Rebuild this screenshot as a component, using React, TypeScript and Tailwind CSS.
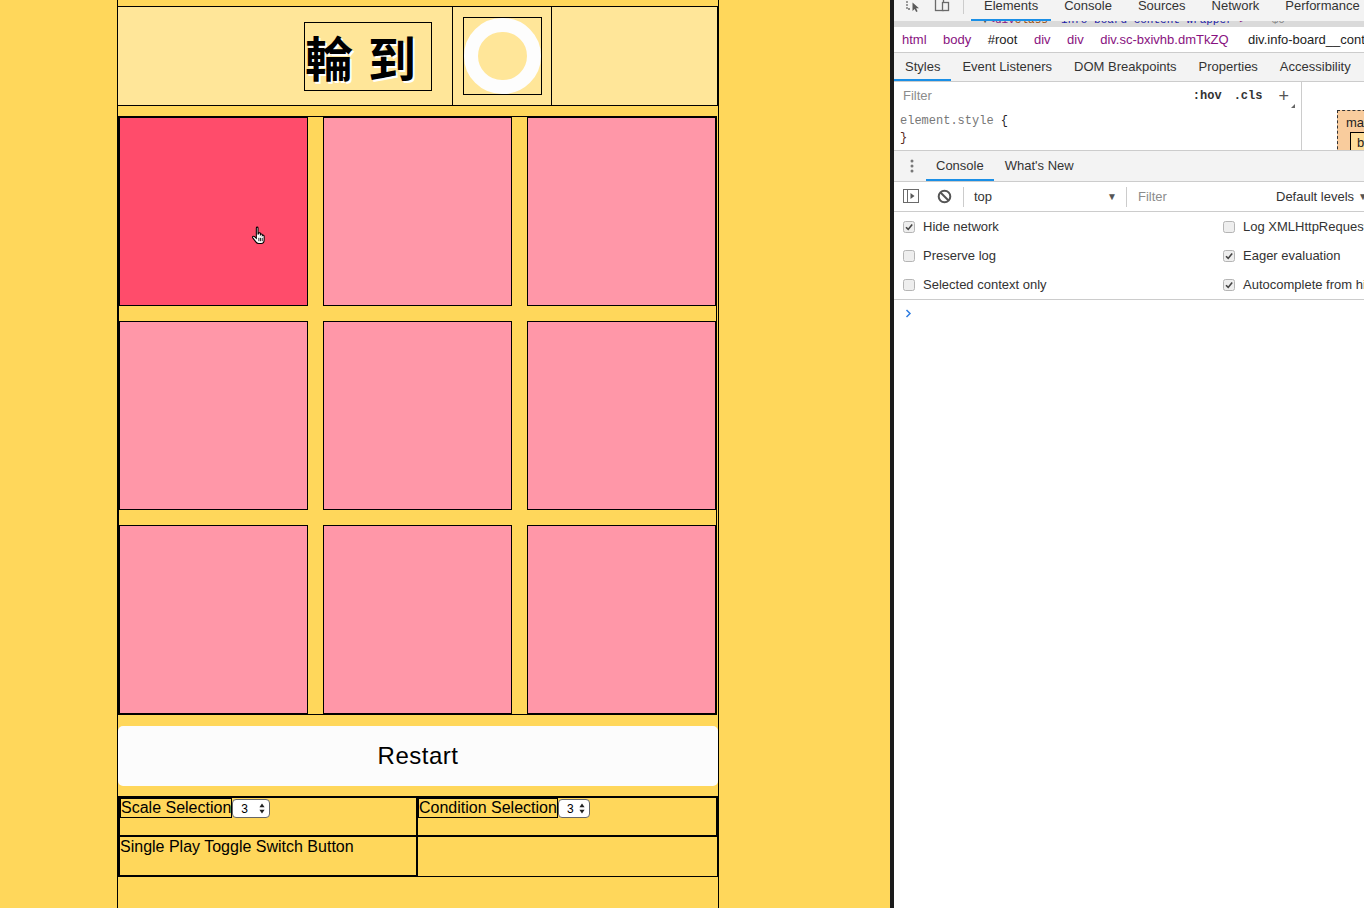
import React from "react";

const cells = [true, false, false, false, false, false, false, false, false];

function Hand() {
  return (
    <svg
      width="17"
      height="19"
      viewBox="0 0 16 18"
      className="absolute left-[251px] top-[226px]"
    >
      <path
        d="M5 1.8 C5 0.8 6.6 0.8 6.6 1.8 V8 L7 7 C7.4 6.2 8.8 6.2 8.9 7.2 V8 C9.3 7.3 10.6 7.3 10.7 8.4 V9 C11.2 8.4 12.4 8.6 12.4 9.6 V13 C12.4 15.2 11.2 16.6 9.6 16.6 H7.2 C6 16.6 5.2 16 4.5 15 L1.6 11.2 C1 10.3 2.1 9.2 3 9.9 L5 11.6 Z"
        fill="white"
        stroke="black"
        strokeWidth="1"
      />
      <path d="M7.4 11.2 V14.4 M9 11.2 V14.4 M10.6 11.2 V14.4" stroke="black" strokeWidth="0.8" />
    </svg>
  );
}

function SelectBox({ w }: { w: string }) {
  return (
    <div
      className={`${w} mt-[1px] flex h-[19px] shrink-0 items-center justify-between rounded-[4px] border border-[#666] bg-white pl-[8px] pr-[4px] text-[12px] leading-none text-black`}
    >
      <span>3</span>
      <svg width="6" height="11" viewBox="0 0 6 11">
        <path d="M3 0.5 L5.6 4.2 H0.4 Z M3 10.5 L5.6 6.8 H0.4 Z" fill="#222" />
      </svg>
    </div>
  );
}

function Check({ on }: { on: boolean }) {
  return (
    <svg width="12" height="12" viewBox="0 0 12 12" className="shrink-0">
      <rect x="0.5" y="0.5" width="11" height="11" rx="2" fill="#eeeeee" stroke="#b5b5b5" />
      {on && <path d="M3 6.2 L5.2 8.4 L9.2 3.4" fill="none" stroke="#444" strokeWidth="1.6" />}
    </svg>
  );
}

function DevTools() {
  return (
    <div className="relative h-[908px] w-[470px] shrink-0 overflow-hidden whitespace-nowrap bg-white font-['Liberation_Sans',Arial,sans-serif] text-[13px] text-[#333]">
      {/* top toolbar */}
      <div className="flex h-[21px] items-start bg-[#f3f3f3]">
        <svg width="16" height="16" viewBox="0 0 16 16" className="ml-[11px] -mt-[4px] shrink-0">
          <path d="M2 2 H13 M2 2 V13 H6" fill="none" stroke="#6a6a6a" strokeWidth="1.3" strokeDasharray="2 1" />
          <path d="M7.5 6.5 L7.5 15 L9.6 13 L11.2 16 L12.6 15.3 L11.1 12.3 L14 12.3 Z" fill="#5a5a5a" />
        </svg>
        <svg width="17" height="16" viewBox="0 0 17 16" className="ml-[13px] -mt-[4px] shrink-0">
          <rect x="1.5" y="1.5" width="8" height="13" fill="none" stroke="#6a6a6a" strokeWidth="1.3" />
          <rect x="8.5" y="6.5" width="6" height="8" fill="#f3f3f3" stroke="#6a6a6a" strokeWidth="1.3" />
        </svg>
        <div className="ml-[12px] h-[14px] w-px shrink-0 bg-[#cccccc]" />
        <div className="ml-[7px] flex shrink-0">
          {["Elements", "Console", "Sources", "Network", "Performance"].map((t, i) => (
            <div
              key={t}
              className={`flex h-[21px] shrink-0 flex-col px-[13px] ${i === 0 ? "border-b-2 border-[#1a8fe6]" : ""}`}
            >
              <span className="-mt-[1px] block leading-[13px]">{t}</span>
            </div>
          ))}
        </div>
      </div>
      {/* clipped dom line */}
      <div className="h-[6px] overflow-hidden bg-[#dadada] font-['Liberation_Mono',monospace] text-[11px] leading-[13px]">
        <div className="-mt-[7px] flex">
          <span className="ml-[6px] shrink-0 text-[#888]">•••</span>
          <span className="ml-[62px] shrink-0 text-[#555]">▼</span>
          <span className="shrink-0 text-[#881280]">&lt;div </span>
          <span className="shrink-0 text-[#994500]">class</span>
          <span className="shrink-0 text-[#881280]">=&quot;</span>
          <span className="shrink-0 text-[#1a1aa6]">info-board  content-wrapper</span>
          <span className="shrink-0 text-[#881280]">&quot;&gt;</span>
          <span className="ml-[6px] shrink-0 text-[#888]">== $0</span>
        </div>
      </div>
      {/* breadcrumbs */}
      <div className="flex h-[26px] items-center border-b border-[#cccccc] bg-white">
        <div className="ml-[8px] flex shrink-0 gap-[16.5px]">
          <span className="shrink-0 text-[#881280]">html</span>
          <span className="shrink-0 text-[#881280]">body</span>
          <span className="shrink-0 text-[#222]">#root</span>
          <span className="shrink-0 text-[#881280]">div</span>
          <span className="shrink-0 text-[#881280]">div</span>
          <span className="shrink-0 text-[#881280]">div.sc-bxivhb.dmTkZQ</span>
          <span className="ml-[3px] shrink-0 text-[#222]">div.info-board__content-wrapper</span>
        </div>
      </div>
      {/* styles tabs */}
      <div className="flex h-[29px] border-b border-[#cccccc] bg-[#f3f3f3]">
        {["Styles", "Event Listeners", "DOM Breakpoints", "Properties", "Accessibility"].map((t, i) => (
          <div
            key={t}
            className={`flex h-[28px] shrink-0 items-center px-[11px] ${i === 0 ? "border-b-2 border-[#1a8fe6] pt-[2px]" : ""}`}
          >
            {t}
          </div>
        ))}
      </div>
      {/* styles pane */}
      <div className="flex h-[68px]">
        <div className="w-[408px] shrink-0 border-r border-[#cccccc]">
          <div className="flex h-[28px] items-center pl-[9px] pr-[12px]">
            <span className="text-[#8c8c8c]">Filter</span>
            <span className="ml-auto font-['Liberation_Mono',monospace] text-[12px] font-bold text-[#333]">:hov</span>
            <span className="ml-[12px] font-['Liberation_Mono',monospace] text-[12px] font-bold text-[#333]">.cls</span>
            <span className="relative ml-[16px] text-[18px] leading-none text-[#555]">
              +
              <span className="absolute -right-[6px] bottom-[-3px] h-0 w-0 border-b-[4px] border-l-[4px] border-b-[#666] border-l-transparent" />
            </span>
          </div>
          <div className="pl-[6px] pt-[3px] font-['Liberation_Mono',monospace] text-[12px] leading-[17px]">
            <div>
              <span className="text-[#777]">element.style</span> <span className="text-[#222]">{"{"}</span>
            </div>
            <div className="text-[#5a2a1a]">{"}"}</div>
          </div>
        </div>
        <div className="relative flex-1">
          <div className="absolute left-[35px] top-[28px] h-[60px] w-[80px] border border-dashed border-[#333] bg-[#f9cc9d] pl-[8px] pt-[2px] text-[13px] text-[#222]">
            ma
            <div className="absolute left-[12px] top-[21px] h-[40px] w-[70px] border border-black bg-[#fddd9b] pl-[6px] text-[13px]">
              b
            </div>
          </div>
        </div>
      </div>
      {/* drawer */}
      <div className="relative flex h-[32px] items-center border-y border-[#cccccc] bg-[#f3f3f3]">
        <svg width="4" height="14" viewBox="0 0 4 14" className="ml-[16px] shrink-0">
          <circle cx="2" cy="2" r="1.5" fill="#777" />
          <circle cx="2" cy="7" r="1.5" fill="#777" />
          <circle cx="2" cy="12" r="1.5" fill="#777" />
        </svg>
        <div className="ml-[12px] flex h-[30px] shrink-0 items-center border-b-2 border-[#1a8fe6] px-[10px] pt-[2px]">Console</div>
        <div className="flex h-[30px] shrink-0 items-center pl-[11px] pr-[10px]">What&apos;s New</div>
      </div>
      <div className="flex h-[30px] items-center border-b border-[#cccccc] bg-white">
        <svg width="17" height="15" viewBox="0 0 17 15" className="ml-[9px] shrink-0">
          <rect x="0.5" y="0.5" width="15" height="13" fill="none" stroke="#6a6a6a" />
          <line x1="4.5" y1="0.5" x2="4.5" y2="13.5" stroke="#6a6a6a" />
          <path d="M7.5 4 L11.5 7 L7.5 10 Z" fill="#5a5a5a" />
        </svg>
        <svg width="15" height="15" viewBox="0 0 15 15" className="ml-[17px] shrink-0">
          <circle cx="7.5" cy="7.5" r="5.8" fill="none" stroke="#555" strokeWidth="2" />
          <line x1="3.5" y1="3.5" x2="11.5" y2="11.5" stroke="#555" strokeWidth="2" />
        </svg>
        <div className="ml-[11px] h-[20px] w-px shrink-0 bg-[#cccccc]" />
        <span className="ml-[10px] w-[20px] shrink-0">top</span>
        <span className="ml-[113px] w-[8px] shrink-0 text-[10px] text-[#555]">▼</span>
        <div className="ml-[11px] h-[20px] w-px shrink-0 bg-[#cccccc]" />
        <span className="ml-[11px] w-[31px] shrink-0 text-[#8c8c8c]">Filter</span>
        <span className="ml-[107px] shrink-0">Default levels</span>
        <span className="ml-[4px] shrink-0 text-[10px] text-[#555]">▼</span>
      </div>
      <div className="border-b border-[#cccccc] bg-white">
        {[
          ["Hide network", true, "Log XMLHttpRequests", false],
          ["Preserve log", false, "Eager evaluation", true],
          ["Selected context only", false, "Autocomplete from history", true],
        ].map((r) => (
          <div key={r[0] as string} className="flex h-[29px] items-center">
            <div className="ml-[9px] flex w-[320px] shrink-0 items-center gap-[8px]">
              <Check on={r[1] as boolean} />
              <span className="shrink-0">{r[0] as string}</span>
            </div>
            <div className="flex shrink-0 items-center gap-[8px]">
              <Check on={r[3] as boolean} />
              <span className="shrink-0">{r[2] as string}</span>
            </div>
          </div>
        ))}
      </div>
      <div className="flex h-[26px] items-center pl-[11px]">
        <svg width="7" height="9" viewBox="0 0 7 9" className="shrink-0">
          <path d="M1.5 1 L5 4.5 L1.5 8" fill="none" stroke="#2f7de1" strokeWidth="1.5" />
        </svg>
      </div>
    </div>
  );
}

export default function App() {
  return (
    <div className="relative flex h-[908px] w-[1364px] overflow-hidden bg-[#ffd75b] font-['Liberation_Sans',Arial,sans-serif]">
      <div className="w-[890px] shrink-0">
        <div className="ml-[117px] flex h-full w-[602px] flex-col border-x border-black pt-[6px]">
          {/* info board */}
          <div className="flex h-[100px] border-y border-r border-black bg-[#ffe699]">
            <div className="flex w-[335px] items-center justify-end border-r border-black pr-[20px]">
              <div className="flex h-[69px] w-[128px] items-center border border-black font-['Noto_Sans_CJK_TC','Noto_Sans_CJK_SC',sans-serif] text-[48px] font-bold leading-none tracking-[2px] text-black [text-shadow:2px_2px_0_#ffffff]">
                輪 到
              </div>
            </div>
            <div className="flex w-[99px] items-center justify-center border-r border-black">
              <div className="flex h-[78px] w-[79px] items-center justify-center border border-black">
                <div className="h-[76px] w-[77px] rounded-full border-[14px] border-[#fdfdfd]" />
              </div>
            </div>
            <div className="flex-1" />
          </div>
          {/* board */}
          <div className="mt-[10px] grid w-[599px] grid-cols-[repeat(3,189px)] gap-[15px] border border-black">
            {cells.map((a, i) => (
              <div
                key={i}
                className={`h-[189px] border border-black ${a ? "bg-[#ff4c6b]" : "bg-[#ff97a8]"}`}
              />
            ))}
          </div>
          {/* restart */}
          <div className="mt-[11px] flex h-[60px] items-center justify-center rounded-[5px] bg-[#fcfcfc] text-[24px] tracking-[0.5px] text-black">
            Restart
          </div>
          {/* settings table */}
          <div className="mt-[10px] grid grid-cols-2 text-[16px] leading-[18px] text-black">
            <div className="flex h-[41px] items-start border-2 border-black">
              <span className="border border-black">Scale Selection</span>
              <SelectBox w="w-[38px]" />
            </div>
            <div className="flex h-[41px] items-start border-y-2 border-r-2 border-black">
              <span className="border border-black">Condition Selection</span>
              <SelectBox w="w-[32px]" />
            </div>
            <div className="h-[40px] border-x-2 border-b-2 border-black pt-[1px]">
              Single Play Toggle Switch Button
            </div>
            <div className="h-[40px] border-b border-r border-black" />
          </div>
        </div>
      </div>
      <div className="w-[4px] shrink-0 bg-[#1b1b1b]" />
      <DevTools />
      <Hand />
    </div>
  );
}
